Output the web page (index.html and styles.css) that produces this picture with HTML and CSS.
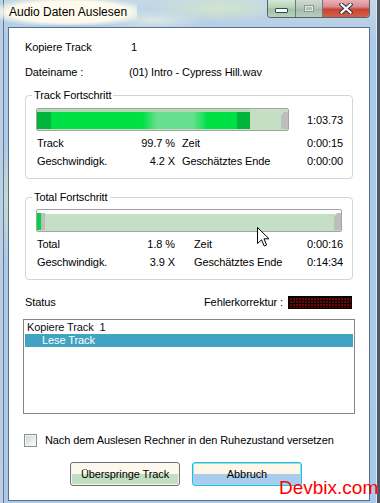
FILE: index.html
```html
<!DOCTYPE html>
<html>
<head>
<meta charset="utf-8">
<title>Audio Daten Auslesen</title>
<link rel="stylesheet" href="styles.css">
</head>
<body>

<div class="window">
  <div class="titlebar">
    <span class="title">Audio Daten Auslesen</span>
    <div class="caption-buttons">
      <span class="cb cb-min"><i></i></span>
      <span class="cb cb-max"><i></i></span>
      <span class="cb cb-close">
        <svg width="14" height="11" viewBox="0 0 14 11">
          <path d="M2.5 1.5 L11.5 9.5 M11.5 1.5 L2.5 9.5" stroke="#2c3a44" stroke-width="4.2" stroke-linecap="square"/>
          <path d="M2.5 1.5 L11.5 9.5 M11.5 1.5 L2.5 9.5" stroke="#fff" stroke-width="2.2" stroke-linecap="square"/>
        </svg>
      </span>
    </div>
  </div>

  <div class="client">
    <div class="info first"><span class="key">Kopiere Track</span><span class="val">1</span></div>
    <div class="info"><span class="key">Dateiname :</span><span>(01) Intro - Cypress Hill.wav</span></div>

    <div class="group">
      <div class="legend">Track Fortschritt</div>
      <div class="bar-row">
        <div class="bar bar-track">
          <div class="fill" style="width:213px"></div>
          <div class="cap"></div>
        </div>
        <span class="elapsed">1:03.73</span>
      </div>
      <div class="stats">
        <span>Track</span><span class="num">99.7 %</span><span class="lbl">Zeit</span><span class="num">0:00:15</span>
        <span>Geschwindigk.</span><span class="num">4.2 X</span><span class="lbl">Geschätztes Ende</span><span class="num">0:00:00</span>
      </div>
    </div>

    <div class="group group-total">
      <div class="legend">Total Fortschritt</div>
      <div class="bar-row">
        <div class="bar bar-total">
          <div class="fill" style="width:4px"></div>
          <div class="stub"></div>
          <div class="cap"></div>
        </div>
      </div>
      <div class="stats">
        <span>Total</span><span class="num">1.8 %</span><span class="lbl">Zeit</span><span class="num">0:00:16</span>
        <span>Geschwindigk.</span><span class="num">3.9 X</span><span class="lbl">Geschätztes Ende</span><span class="num">0:14:34</span>
      </div>
    </div>

    <div class="status-row">
      <span>Status</span>
      <span class="ecc">Fehlerkorrektur : <span class="led"></span></span>
    </div>

    <div class="listbox">
      <div class="item">Kopiere Track&nbsp; 1</div>
      <div class="item selected">Lese Track</div>
    </div>

    <label class="check-row"><span class="checkbox"></span>Nach dem Auslesen Rechner in den Ruhezustand versetzen</label>

    <div class="buttons">
      <button class="btn">Überspringe Track</button>
      <button class="btn btn-default">Abbruch</button>
    </div>
  </div>

  <div class="watermark">Devbix.com</div>

  <svg class="cursor" width="13" height="20" viewBox="0 0 13 20">
    <path d="M0.5 0.5 L0.5 16.5 L4.5 12.8 L7.2 19 L9.6 18 L7 11.8 L12 11.8 Z" fill="#fff" stroke="#000" stroke-width="1" stroke-linejoin="miter"/>
  </svg>
</div>

</body>
</html>
```

FILE: styles.css
```css
body {
  margin: 0;
  background: linear-gradient(to right, #b8cfe6 3px, #4d5866 3px);
  font-family: "Liberation Sans", Arial, sans-serif;
  font-size: 11px;
  letter-spacing: -0.1px;
  color: #000;
}

.window {
  position: relative;
  width: 374px;
  height: 503px;
  margin-left: 3px;
  box-sizing: border-box;
  border-left: 1px solid #66768a;
  border-right: 1px solid #dce6ef;
  background:
    radial-gradient(ellipse 70px 14px at 215px 8px, #d2e4cc, rgba(210,228,204,0)),
    radial-gradient(ellipse 50px 10px at 150px 20px, #dbe8e4, rgba(219,232,228,0)),
    radial-gradient(ellipse 10px 60px at 4px 200px, #c9dccb, rgba(201,220,203,0)),
    linear-gradient(#c4d9e6, #aecae9 40px, #aac8ea);
}

/* title bar */
.titlebar {
  display: flex;
  justify-content: space-between;
  height: 27px;
}

.title {
  display: inline-block;
  height: 25px;
  line-height: 24px;
  margin-left: -4px;
  padding: 0 10px 0 9px;
  font-size: 12px;
  letter-spacing: 0;
  background: radial-gradient(ellipse 62% 60% at 50% 48%, #fffbec 70%, rgba(255,251,236,0) 100%);
}

.caption-buttons {
  display: flex;
  margin-right: 6px;
  height: 17px;
  border: 1px solid #56636e;
  border-top: 0;
  border-radius: 0 0 4px 4px;
  overflow: hidden;
}

.cb {
  display: flex;
  align-items: center;
  justify-content: center;
  height: 17px;
  background: linear-gradient(#d6e8d6, #b6d2b6 45%, #a2c2a6 55%, #b4d2c0);
}

.cb-min {
  width: 27px;
  border-right: 1px solid #6c7a80;
}

.cb-min i {
  width: 11px;
  height: 3px;
  margin-top: 3px;
  background: #fff;
  border: 1px solid #37464f;
  border-radius: 1px;
}

.cb-max {
  width: 26px;
  border-right: 1px solid #6c7a80;
  background: linear-gradient(#d0dccf, #b8c8b8 45%, #a8bcae 55%, #b8ccc0);
}

.cb-max i {
  width: 8px;
  height: 5px;
  border: 1px solid #8a9a94;
  box-shadow: inset 0 0 0 1px #dfe7e2;
}

.cb-close {
  width: 46px;
  background: linear-gradient(#eab1b8, #da8a8e 40%, #c94232 55%, #d4604a);
}

/* client area */
.client {
  width: 362px;
  height: 474px;
  margin-left: 4px;
  box-sizing: border-box;
  border: 1px solid #5b6d88;
  background: #fff;
  padding: 0 16px;
}

.info {
  display: flex;
  height: 14px;
  line-height: 14px;
  margin-top: 11px;
}

.info.first {
  margin-top: 12px;
}

.info .key {
  width: 104px;
}

.info .val {
  padding-left: 2px;
}

.group {
  margin-top: 16px;
  border: 1px solid #c6ddc6;
  border-radius: 4px;
  padding: 0 9px 8px 10px;
}

.group-total {
  margin-top: 18px;
}

.legend {
  width: fit-content;
  margin: -8px 0 0 -4px;
  padding: 0 2px;
  line-height: 14px;
  background: #fff;
}

.bar-row {
  display: flex;
  align-items: center;
  justify-content: space-between;
  margin-top: 6px;
}

.group-total .bar-row {
  margin-top: 5px;
}

.bar {
  display: flex;
  align-items: flex-end;
  box-sizing: border-box;
  width: 253px;
  height: 23px;
  padding-bottom: 1px;
  border: 1px solid #a4a4a4;
  border-radius: 2px;
  background: #c4dfc4;
}

.bar-track {
  background: linear-gradient(#c9dfc9, #c4dfc4 3px);
}

.bar-total {
  width: 306px;
  background: linear-gradient(#fbfbfb 0 4px, #c4dfc4 4px);
}

.fill {
  height: 17px;
  box-shadow: 0 -3px 0 #b2d9b2;
  background: linear-gradient(to right,
    #00b43c 0 14px, #00e045 14px 106px, #3ee070 114px, #68df8e 120px 156px,
    #3ee070 162px, #00e045 170px 200px, #00b43c 200px);
}

.bar-total .fill {
  box-shadow: none;
  background: #00d444;
}

.stub {
  width: 4px;
  height: 17px;
  background: #bdbdbd;
}

.cap {
  width: 7px;
  height: 17px;
  margin-left: auto;
  background: #bdbdbd;
  clip-path: polygon(45% 0, 100% 0, 100% 100%, 0 100%, 0 25%);
}

.elapsed {
  line-height: 14px;
}

.stats {
  display: grid;
  grid-template-columns: 97px 41px 1fr auto;
  margin-top: 3px;
  padding-left: 1px;
  line-height: 18px;
}

.stats .num {
  text-align: right;
  white-space: pre;
}

.stats .lbl {
  padding-left: 7px;
}

.group-total .stats .lbl {
  padding-left: 19px;
}

/* status */
.status-row {
  display: flex;
  align-items: center;
  justify-content: space-between;
  height: 14px;
  margin-top: 15px;
}

.ecc {
  display: flex;
  align-items: center;
}

.led {
  display: inline-block;
  width: 64px;
  height: 13px;
  margin: 0 1px 0 5px;
  box-sizing: border-box;
  border: 1px solid #000;
  background-color: #7e0000;
  background-image:
    linear-gradient(90deg, #000 1px, transparent 1px),
    linear-gradient(#000 1px, transparent 1px);
  background-size: 3px 3px;
}

.listbox {
  height: 95px;
  margin: 10px -2px 0;
  padding: 1px 1px 0;
  box-sizing: border-box;
  border: 1px solid #858585;
}

.item {
  line-height: 13px;
  padding-left: 2px;
  color: #0c0c20;
}

.item.selected {
  background: #41a2c2;
  color: #fff;
  padding-left: 17px;
}

.check-row {
  display: flex;
  align-items: center;
  height: 14px;
  margin-top: 19px;
}

.checkbox {
  width: 13px;
  height: 13px;
  margin: 0 8px 0 -1px;
  box-sizing: border-box;
  border: 1px solid #8e8f8f;
  background: linear-gradient(135deg, #c9d6c9, #eef3ee 70%, #fff);
  box-shadow: inset 0 0 0 1px #f4f4f4;
}

.buttons {
  display: flex;
  justify-content: center;
  gap: 12px;
  margin-top: 15px;
  padding-right: 6px;
}

.btn {
  width: 110px;
  height: 24px;
  padding: 0;
  border: 1px solid #707070;
  border-radius: 3px;
  font-family: "Liberation Sans", Arial, sans-serif;
  font-size: 11px;
  letter-spacing: -0.1px;
  color: #000;
  background: linear-gradient(#fcf8ee 50%, #c3dfc3 50%);
  box-shadow: inset 0 0 0 1px #f6f6f0;
}

.btn-default {
  border-color: #2fb6d8;
  background: linear-gradient(#fdf7ea 50%, #a9cbee 50%);
  box-shadow: inset 0 0 0 1px #8ee2f4;
}

/* overlays */
.watermark {
  position: absolute;
  left: 275px;
  top: 477px;
  font-size: 19px;
  line-height: 22px;
  letter-spacing: 0;
  color: #ff0000;
}

.cursor {
  position: absolute;
  left: 253px;
  top: 227px;
}
```
